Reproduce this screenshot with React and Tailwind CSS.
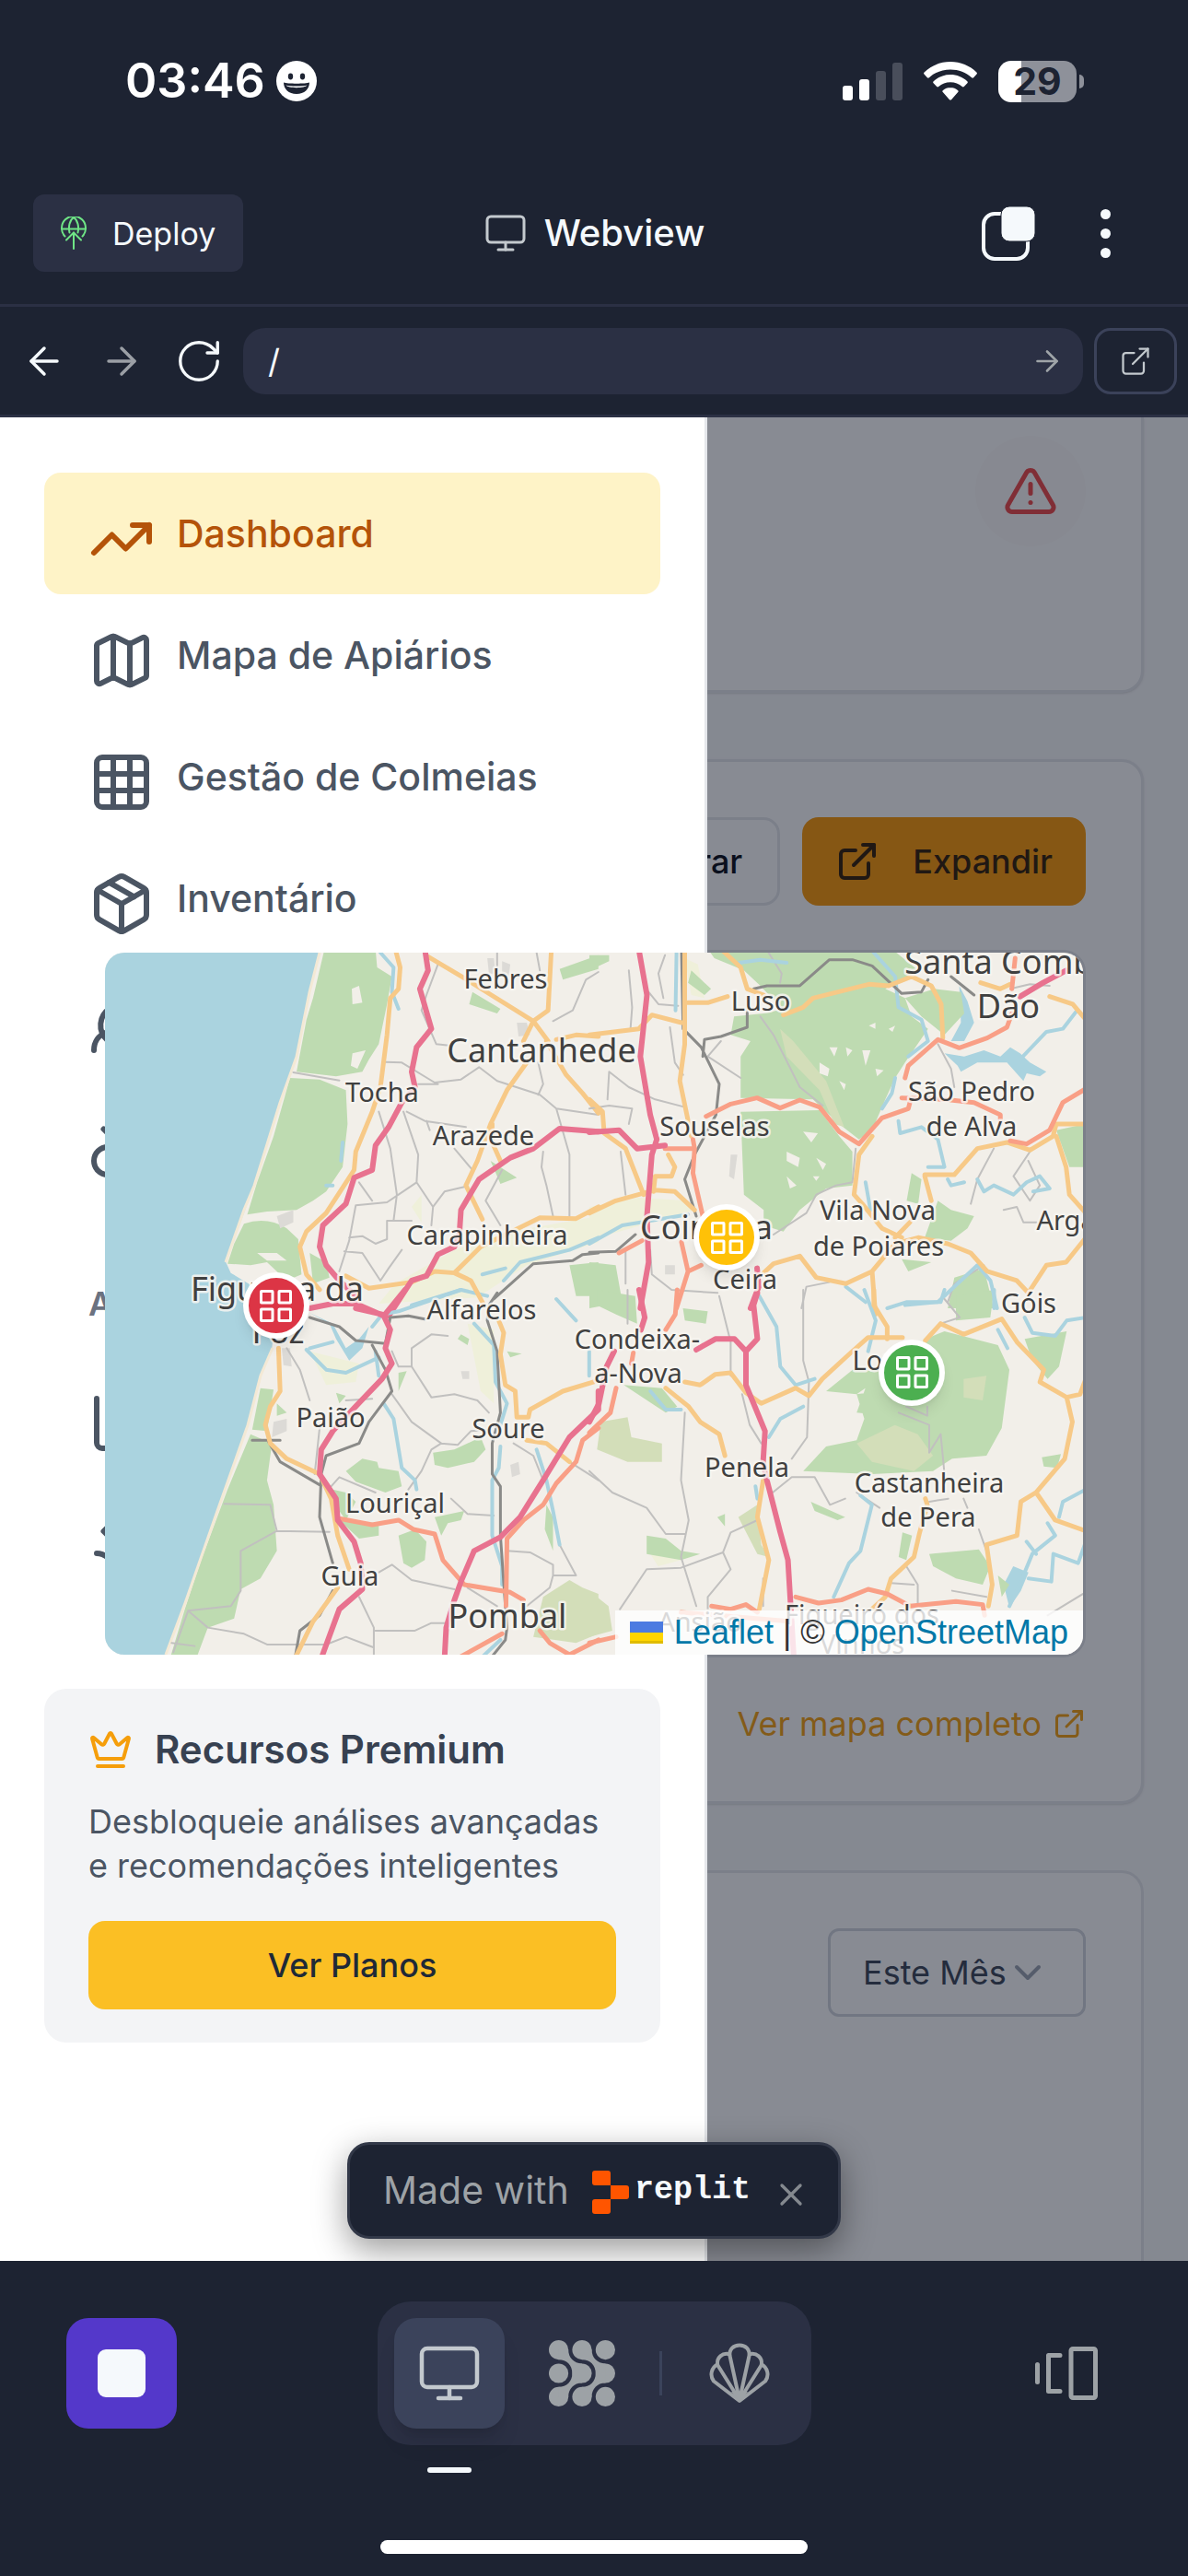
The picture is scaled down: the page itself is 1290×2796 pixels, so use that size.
import React from "react";
import {
  TrendingUp,
  Map as MapIcon,
  Grid3x3,
  Package,
  Crown,
  ExternalLink,
  TriangleAlert,
  Monitor,
  ArrowLeft,
  ArrowRight,
  RotateCw,
  ChevronDown,
  X,
} from "lucide-react";

/* ---------- status bar ---------- */

function StatusBar() {
  return (
    <div className="flex h-44 items-center justify-between pl-[136px] pr-[113px]">
      <div className="flex items-center gap-3 text-white">
        <span className="text-[52px] font-semibold leading-none">03:46</span>
        <svg viewBox="0 0 44 44" className="size-11" aria-hidden="true">
          <circle cx="22" cy="22" r="22" fill="#fff" />
          <ellipse cx="15.5" cy="17" rx="2.7" ry="3.4" fill="#1d2332" />
          <ellipse cx="28.5" cy="17" rx="2.7" ry="3.4" fill="#1d2332" />
          <path d="M8 23.5c4 1.6 24 1.6 28 0 0 7-5.500 12.500-14 12.500S8 30.500 8 23.500Z" fill="#1d2332" />
          <path d="M10.500 26.500c4 1.300 19 1.300 23 0-2 3.500-21 3.500-23 0Z" fill="#fff" />
        </svg>
      </div>
      <div className="flex items-center gap-[23px]">
        <div className="flex h-[41px] items-end gap-[7px]">
          <span className="h-4 w-[11px] rounded-[3px] bg-white" />
          <span className="h-[23px] w-[11px] rounded-[3px] bg-white" />
          <span className="h-8 w-[11px] rounded-[3px] bg-[#494e5b]" />
          <span className="h-[41px] w-[11px] rounded-[3px] bg-[#494e5b]" />
        </div>
        <svg viewBox="0 0 58 42" className="h-[42px] w-[58px]" fill="#fff" aria-hidden="true">
          <path d="M29 0C18 0 8 4.300.6 11.400c-.7.700-.7 1.500-.1 2.200l3.400 3.600c.6.600 1.400.6 2 0C12 11.700 20 8.400 29 8.400s17 3.300 23.100 8.800c.6.600 1.400.6 2 0l3.400-3.600c.6-.7.6-1.500-.1-2.200C50 4.300 40 0 29 0Z" />
          <path d="M29 14c-7 0-13.500 2.700-18.300 7.200-.7.700-.7 1.500-.1 2.100l3.600 3.700c.6.600 1.400.6 2 0 3.400-3 7.900-4.800 12.800-4.800s9.400 1.800 12.800 4.800c.6.600 1.400.6 2 0l3.600-3.700c.6-.6.6-1.400-.1-2.100C42.500 16.700 36 14 29 14Z" />
          <path d="M29 28c-3 0-5.900 1.100-8 2.900-.8.700-.8 1.500-.2 2.200l7 7.900c.7.800 1.700.8 2.400 0l7-7.900c.6-.7.6-1.500-.2-2.200-2.100-1.800-5-2.900-8-2.900Z" />
        </svg>
        <div className="flex items-center gap-[3px]">
          <div className="flex h-[45px] w-[85px] items-center justify-center rounded-[14px] bg-linear-to-r from-white from-30% to-[#8e919a] to-30%">
            <span className="text-[41px] font-bold leading-none text-[#1d2332]">29</span>
          </div>
          <span className="h-[15px] w-[5px] rounded-r-full bg-[#8e919a]" />
        </div>
      </div>
    </div>
  );
}

/* ---------- workspace header ---------- */

function DeployIcon() {
  return (
    <svg viewBox="0 0 28 36" className="h-9 w-7" fill="none" stroke="#6fe586" strokeWidth="2" strokeLinecap="round" aria-hidden="true">
      <path d="M4.500 21.500A13 13 0 1 1 23.500 21.500" />
      <path d="M1 13.500h26" />
      <path d="M9.500 17.500C8 11 9.500 4 14 1c4.500 3 6 10 4.500 16.500" />
      <path d="M14 35V18M6 25.500l8-8 8 8" />
    </svg>
  );
}

function WorkspaceHeader() {
  return (
    <header className="grid h-[157px] grid-cols-[1fr_auto_1fr] items-center border-b-3 border-[#2b3044] px-9">
      <button className="flex h-[84px] items-center gap-7 justify-self-start rounded-xl bg-[#2b3044] px-[30px] text-[34px] text-[#f5f9fc]">
        <DeployIcon />
        Deploy
      </button>
      <div className="flex items-center gap-[18px] text-[#f5f9fc]">
        <Monitor className="size-12 text-[#c3c9ce]" strokeWidth={1.5} />
        <h1 className="text-[40px] font-medium leading-none">Webview</h1>
      </div>
      <div className="flex items-center justify-end gap-[71px] pr-12">
        <button aria-label="Tabs">
          <svg viewBox="0 0 58 59" className="h-[59px] w-[58px]" aria-hidden="true">
            <rect x="2" y="8" width="48" height="49" rx="12" fill="none" stroke="#f5f9fc" strokeWidth="4" />
            <rect x="21" y="0" width="37" height="38" rx="9" fill="#f5f9fc" stroke="#1d2332" strokeWidth="1" />
          </svg>
        </button>
        <button aria-label="More options" className="flex flex-col gap-2.5">
          <span className="size-[11px] rounded-full bg-[#f5f9fc]" />
          <span className="size-[11px] rounded-full bg-[#f5f9fc]" />
          <span className="size-[11px] rounded-full bg-[#f5f9fc]" />
        </button>
      </div>
    </header>
  );
}

function BrowserBar() {
  return (
    <div className="flex h-[120px] items-center border-b-3 border-[#2b3044] pl-1.5 pr-3">
      <button aria-label="Back" className="flex w-[84px] justify-center text-[#f5f9fc]">
        <ArrowLeft className="size-12" strokeWidth={1.75} />
      </button>
      <button aria-label="Forward" className="flex w-[84px] justify-center text-[#9b9fa5]">
        <ArrowRight className="size-12" strokeWidth={1.75} />
      </button>
      <button aria-label="Reload" className="flex w-[84px] justify-center text-[#f5f9fc]">
        <RotateCw className="size-[54px]" strokeWidth={1.5} />
      </button>
      <div className="ml-1.5 flex h-[72px] min-w-0 flex-1 items-center rounded-3xl bg-[#2b3044] pl-[27px] pr-[21px]">
        <input aria-label="Path" defaultValue="/" className="min-w-0 flex-1 bg-transparent text-4xl leading-none text-[#f5f9fc] outline-none" />
        <button aria-label="Go" className="text-[#9fa4a8]">
          <ArrowRight className="size-9" strokeWidth={1.75} />
        </button>
      </div>
      <button aria-label="Open in new tab" className="ml-3 flex h-[72px] w-[90px] items-center justify-center rounded-[18px] border-3 border-[#3b425a] text-[#c3c9ce]">
        <ExternalLink className="size-9" strokeWidth={1.5} />
      </button>
    </div>
  );
}

/* ---------- map ---------- */

const TILES = [
  {
    id: "nw",
    transform: "translate(-24 -14) scale(.357 .3333)",
    ocean: "M0 0H725L718 42L690 170L650 380L600 530L520 800L490 890L435 1050L450 1085L520 1130L565 1215H0Z",
    pale: "M950 1120L1130 1010L1300 950L1568 900V985L1350 1060L1200 1165L900 1185ZM1000 870L1030 830L1030 920Z",
    forest:
      "M735 30H890L895 90L940 120L925 210L900 340L870 390L850 430L770 445L650 430L680 260L700 190ZM630 450L720 455L800 490L805 600L790 740L740 820L700 850L650 880L560 885L500 895L530 790L580 640ZM490 925Q560 900 620 940L655 975L665 1090L620 1110L560 1050L510 1060L440 1055L460 990ZM690 1020L740 1050L750 1100L700 1120ZM1185 170L1270 225L1260 240L1175 210ZM1240 720L1320 775L1270 795ZM1450 95L1568 50V95L1460 130ZM1480 1060L1568 1050V1160L1500 1160Z",
    clearing: "M818 160l22-10 10 55-30 5zM820 370l40-10-25 60-20-10zM530 1020l60 0 30 25-60 0z",
    scrub: "",
    urban: "M1230 60l20 0 5 50-20 0zM1275 70l25 10-5 40-20-5zM1320 270l30 0 10 40-35 5zM590 900l50-20 0 40-40 20z",
    gray:
      "M1080 80L1045 180L1030 230L1075 340L1120 345M920 398L970 400L1070 465L1150 455L1205 415L1260 460L1390 505L1440 550L1568 570M640 432L780 458M900 560L935 680L955 830L945 915M975 560L1020 700L1015 790L960 830L925 855L830 865L810 980L780 1080M985 560L1040 590L1165 610M1015 790L1065 870L1060 930M1065 870L1100 820L1160 805M795 1015L850 1020L905 1110L930 1070L970 1010M810 970L850 965L890 990L925 975V915H1000M1568 105L1530 130L1490 230L1430 265M1385 400L1400 470L1385 505M1440 550L1480 700V900M1400 690L1395 740L1410 800L1430 900M1275 750L1225 850L1270 930M1130 680L1185 750M1380 42L1390 100M1260 42V100M1020 470H1080M840 790L880 850M1045 590L1055 620",
    rail: "M1568 1020L1520 1025L1490 1045L1370 1055L1250 1170",
    river: "M905 42L945 90L940 170L960 225M1568 970L1480 1010L1330 1050L1280 1110M1215 1090L1285 1070M790 660L785 720M740 800h20M1000 1190L1150 1140L1230 1160",
    orange:
      "M950 30L965 90L960 160L935 190L925 310L905 480L880 560L830 690L825 750L740 890L680 950L660 1000L680 1090L720 1140M1050 55L1160 125L1370 265L1415 330M1425 30L1415 230L1370 265L1340 330M1350 400L1290 490L1240 600L1200 720L1165 800L1215 910M1245 600L1245 660L1270 720M1410 330L1470 440L1520 500L1568 565M1440 325L1500 310L1568 315M800 1095L870 1135L1000 1115L1070 1080L1130 1085L1210 1000L1390 905L1500 908L1568 870M1130 1085L1180 1110L1220 1190",
    salmon: "",
    pink:
      "M1040 30L1050 100L1025 160L1060 290L1015 350L1000 430L1010 480L970 530L930 610L890 670L880 750L825 775L800 860L730 930L720 1000L740 1060L780 1110L830 1160M1568 625L1450 615L1370 680L1300 710L1205 780L1150 880L1145 960L1130 1000L1080 1025L1045 1095L1000 1110L930 1225",
  },
  {
    id: "ne",
    transform: "translate(526 -14) scale(.357 .3333)",
    ocean: "M1080 370L1140 380L1200 360L1250 380L1280 350L1310 370L1340 400L1390 430L1370 445L1330 435L1320 460L1270 400L1180 400L1130 430L1120 410ZM1125 150L1150 200L1170 270L1140 330L1100 330L1130 270Z",
    pale: "M290 60L330 80L350 190L310 180ZM0 870L150 840L300 850L320 880L60 960L0 980Z",
    forest:
      "M360 30H920L1000 100L900 160L700 200L600 240L520 150L470 100L380 60ZM530 240L700 200L900 160L960 190L980 250L1030 290L960 400L930 450L900 520L860 620L820 650L760 600L640 480L600 400ZM440 250L530 240L600 400L680 520L460 515L460 380L490 330L430 310ZM460 560L700 555L760 640L800 690V800L720 810L640 880L590 950L530 930V880L470 830ZM960 190L1050 160L1130 170L1140 240L1080 310L1010 250ZM1420 620L1510 600V740L1460 740ZM980 760L1010 780L1000 860L965 850ZM1060 850L1100 880L1170 900L1150 940L1100 980L1020 970ZM0 50H60V70L0 100ZM0 1050L80 1060L100 1180L0 1200ZM1110 1100L1200 1070L1230 1200H1090ZM310 100L370 160L350 180L300 140ZM950 1040L1040 1050L970 1080Z",
    clearing: "M700 400l30 20-5 25-25-10zM730 350l25 0-10 30zM780 350l20 10-15 20zM600 690l40 20-5 30-35-20zM650 625l45 5-20 30zM600 770l30 30-20 10zM830 360l25 0-15 50zM870 420l25 5-20 20zM760 460l20 10-5 20zM850 280l20-10 0 20zM910 290l20-10-8 20zM690 710l30 20-10 20zM680 770l20 0-10 15z",
    scrub: "M580 290L620 330L720 460L775 610L745 600L700 490L600 380Z",
    urban: "M430 700l20 0-10 80-15-10zM230 1060l30 0 0 30-30 0z",
    gray:
      "M230 50L210 110L225 190M120 100L130 220L125 290M60 430L120 480L200 520L290 545M0 550L60 540L130 550L120 600M245 285L260 400L285 440M360 380L460 450M400 330L360 380M520 250L560 310L640 480L710 540M95 690L110 830M1060 340L1100 420L1110 480M1230 680L1180 780L1160 860M1340 690L1290 770L1340 850L1370 800L1335 720M110 1010V1120M185 1010L190 1090L250 1140L390 1150M810 680L800 790L750 800L690 830L660 890L560 960M645 1200L660 1130L730 1115M1090 1180L1110 1120L1200 1060M1260 880L1300 870L1320 920H1360M545 42L585 110L580 140M60 430L55 520M180 170L210 210L270 215M1280 160L1340 145L1400 150",
    rail:
      "M280 30L285 290L340 350L395 470L385 570L320 700L290 780L325 900M345 380L350 325L400 315L480 285V235M500 160L540 150L640 150L730 65H800L860 85L950 175L1010 170L1030 130M0 1018L80 1015L140 960M1100 120L1170 180",
    river:
      "M865 42L930 120L940 220L1010 260L1030 330L970 380M1310 390L1390 300L1440 290L1480 235M930 450L920 500L890 550M940 590L945 630L1010 610L1060 650L1080 740H1030M1090 780L1100 800L1140 790M1180 780L1200 820L1230 800L1290 830L1330 790L1370 770L1400 810L1350 820M840 790L855 880M0 990L100 930L300 895M780 1130L840 1180M960 1190L1060 1180L1180 1060L1220 1110L1240 1200M265 42L262 230M455 75L520 65L600 75",
    orange:
      "M0 310L150 290L190 245L280 270M290 30V340L275 460L310 640M400 30L460 90L480 160L530 180M300 205H360L420 185M590 245L650 220L680 190L850 145L910 150L980 120L1040 150L1070 210L1075 320M0 520L40 560L45 630L110 680L165 830M0 890L80 850L200 815L260 820L320 880M240 700L260 740L250 770L200 770L195 820M860 640L820 700L805 830L830 860L890 940L950 970M930 970L975 920M1020 765H1110L1180 680L1270 660L1340 685L1410 640L1420 600H1510M1420 640L1450 740L1460 830L1510 890M1020 770L1040 850M530 1085L560 1055L640 1030L690 1100L780 1120L860 1080L870 1220M860 1080L930 990L1000 970L1090 990L1160 1020L1210 1080L1300 1110L1335 1150L1390 1060L1450 1050L1510 970M1400 185L1470 210L1510 260M1190 140L1250 160L1280 145",
    salmon:
      "M355 575L430 535L510 515L580 548L640 522L700 545L760 625L820 665L890 580L970 550L975 530M960 450L970 410L1060 325L1125 352L1210 320L1270 285L1285 240M1285 160L1295 60M950 515L1080 520L1170 530L1250 570V600M1280 655L1330 665L1400 620L1440 530L1510 485M230 680H320L315 760L345 900M320 680L315 650M90 1020L160 980M280 985L300 1080L340 1060M300 1080L265 1200",
    pink: "M150 30L175 180L155 380L185 570L205 650L190 700L175 900L180 1050L155 1200M0 627L90 620L145 680L230 670M510 1070L515 1130L490 1200M1310 185L1380 140L1450 100",
  },
  {
    id: "sw",
    transform: "translate(-24 366) scale(.357 .3333)",
    ocean: "M0 40H590L575 190L540 280L500 440L410 720L350 900L310 1020L250 1200H0ZM690 75L750 110L770 160L810 230L850 190L870 120L840 160L800 190L760 110Z",
    pale: "M690 200L840 240L830 300L740 310ZM1170 110L1250 130V370L1210 330Z",
    forest:
      "M540 320L580 325L560 460L515 455ZM510 470L575 500L560 620L580 700L590 850L540 940L480 975L460 1070L380 1100L345 1200H265L310 1040L360 880L440 650ZM800 590L850 550L895 560L900 580L960 590L970 640L920 660L830 625ZM1065 530L1130 520L1210 480L1225 520L1190 560L1110 580L1070 570ZM960 800L1010 780L1045 820L1040 880L1000 905L975 890ZM1070 740L1160 720L1150 750L1110 760L1090 800ZM780 750L900 760V800L840 810ZM760 650L800 660L830 690L800 750L780 720ZM1140 160L1150 145L1175 160L1170 180ZM960 270L985 265L960 330ZM770 335L800 345L780 370ZM590 370L620 400L590 410ZM1290 200L1335 208L1300 220ZM1410 700L1430 740L1430 850L1405 780Z",
    clearing: "",
    scrub: "M1400 1000L1480 945L1520 970L1568 990V1120L1500 1150L1370 1130Z",
    urban: "M580 430l40-10 0 40-45 20zM605 190l25 0 5 60-25-5zM1300 570l25-10 5 40-25 10zM1150 265l25 0 0 25-20 0z",
    gray:
      "M1110 150L1060 145L1000 190V250L1060 350L1130 340L1200 360L1235 400M940 340L1000 430L1090 500L1060 520L1030 590L990 650M1090 500L1140 505L1180 460L1240 455M620 190L660 260L690 360M720 450L705 600M430 697L570 700L590 785L480 850V980L450 1030L320 1045L380 1100L490 1120L560 1155H740L800 1130L885 1165V1200M590 785L750 788M755 640L780 610L890 660M900 920L940 895L1000 945L1130 975M840 1000L885 1100V1165M890 1110H1010L1060 1085H1110M1290 850L1360 855L1430 895V930H1500M1450 830L1500 930M1430 930L1420 970L1350 1030M1310 500L1370 540L1400 620M1480 560L1568 620M1120 680L1170 730L1250 735M1170 970L1260 1030M800 360L880 355M940 200L960 250H1000M270 1150L340 1160M320 1045L275 1180",
    rail:
      "M690 90L780 120L830 165L920 175L935 90L990 85L1040 95M880 180L920 260L940 330L870 430L840 500L740 540L725 600L720 740L760 890M760 980L720 1060L660 1110L645 1200M515 490H600M565 495L600 560L720 635M1260 10L1235 50L1230 100L1260 200L1270 400L1245 500V600L1270 640V800L1285 1030L1290 1100L1285 1140L1240 1200",
    river:
      "M680 195L740 260L800 270L900 220M690 190L760 170M880 120L910 80L960 70L1150 0M915 370L945 420L970 580L1010 620L1015 650M1190 110L1250 180L1255 300L1290 370L1270 440M1270 510L1265 580L1245 620V800L1275 900V960M1380 520L1410 620L1430 720L1450 830M1440 30L1500 100M1540 200V280M890 200L900 280M1270 1140L1210 1200",
    orange:
      "M595 190L600 330L570 380L555 440L570 500L620 550L720 600L755 680L775 800L810 910M775 970L700 1080L645 1200M1265 100L1280 140L1270 210L1285 310L1315 330L1320 415H1355L1360 390L1460 330L1568 295M1350 490L1410 500L1480 560",
    salmon: "M780 745L880 765L960 750L1005 780L1070 795L1095 880L1160 960L1300 985L1340 1010M1568 450L1520 490L1500 560L1440 630L1400 700L1340 750L1290 810L1287 1030M1390 1110L1420 1150L1480 1188L1568 1140M1275 1120L1140 1200",
    pink:
      "M690 60L760 45L830 45L915 85L980 0M830 60L910 80M915 85L935 130L920 190L940 240L910 290L825 385L760 460L725 520L720 600L770 680L775 750L825 820L845 890L850 975L780 1040L725 1200M1568 330V390L1480 480L1400 620L1330 740L1270 805L1190 850L1150 950L1130 1010L1105 1100L1100 1200",
  },
  {
    id: "se",
    transform: "translate(526 366) scale(.4146 .3333)",
    ocean: "M1085 960L1110 900L1150 920L1130 980L1100 1035Z",
    pale: "M160 860L240 880L180 900Z",
    forest:
      "M900 150L930 135L1070 180L1100 260L1080 450L1040 540L950 550L900 590L740 600L560 590L620 510L700 490L720 420L700 340L760 330L880 350ZM620 330L700 250L770 280L700 340ZM740 260L900 150L960 300L860 420L700 400ZM1140 160L1250 135L1230 250L1200 290L1160 230ZM960 20L1060 0L1050 90L960 100ZM890 860L1020 845L1050 900L1030 960L960 940L900 900ZM580 690L670 740L650 750L590 720ZM1070 930L1100 960L1080 1000ZM1185 545L1235 535L1225 580L1190 575ZM20 0L120 20L125 110L70 80L20 50ZM245 60L310 70L305 110L250 100ZM90 310L190 320L230 380L200 400ZM150 800L200 810L240 850L290 860L240 880L150 860ZM820 790L845 800L830 880L810 870ZM335 740L355 730V770Z",
    clearing: "",
    scrub: "M30 430L100 415L110 480L190 500V560L100 560L20 520ZM700 500L800 440L860 470L900 540L850 590L740 560ZM390 740L440 700L450 830L470 870L440 860ZM0 980L50 1030L60 1110L0 1130ZM980 290L1040 280L1030 360L980 350Z",
    urban: "",
    gray:
      "M250 400L240 620L260 750L240 870L280 1030M0 590L60 660L150 710L200 795H250M560 0V230L575 300L570 480L530 550M340 20L370 170V280M400 340L420 440L450 500M80 1040L150 910L240 905L350 855L370 790L440 750M350 855L370 910L310 1000V1040M810 400L890 440V530L920 470L930 600M480 660L530 610H590L630 700L670 680M700 660L760 710M890 690L940 680M980 680L990 710M1020 780L1040 850M830 900L860 960V1030M790 955L850 960M950 980L1040 1000M1293 990L1200 1060M930 30L970 90L920 110M830 380L885 410V380M100 0V110M455 940V1030",
    rail: "",
    river:
      "M445 20L490 120L500 250L540 310L590 290M560 380L500 420L470 480M720 0L750 100L730 200M780 60L830 40L920 40L930 0M1060 0V60M1070 130L1095 190M1140 90L1160 140L1220 150L1250 100L1300 90M710 670L740 700L710 850L680 890L640 1000M1300 650L1240 690L1230 740M1200 760L1220 800L1160 860L1130 950L1100 1030M1300 820L1280 890L1215 860L1210 950L1150 940M160 330L200 390H240M435 640L440 680M1145 820L1170 860",
    orange:
      "M200 320L260 380L290 430L340 470L355 540M250 300L290 310L330 275L370 270L410 335L450 370L540 320L575 345L610 290L680 210L730 155H820M780 160V120L745 50V0M880 165L920 110L980 145L1080 95L1120 170L1190 260L1180 300L1250 350L1265 430L1245 550L1170 660L1130 690L1120 800L1040 830L1055 960L1045 1030M1250 350L1285 340L1300 290M1170 660L1220 750L1300 785M880 680L885 700L865 790L850 870L790 940L775 1000L740 1040M455 620L440 740L470 880L445 1040",
    salmon: "M230 0L225 80L200 130M115 205L110 240M70 320L55 400L0 465M320 1030L370 1040L410 1025L440 1050M540 1000L600 1020L660 1010L730 975L780 990L840 1030L960 1015L1030 1025L1035 1060M0 1150L70 1130M240 1050L530 1080",
    pink: "M130 0L145 90L135 130M440 10L430 50L440 160L410 200L380 160H330L280 195M410 200V310L460 460L455 560L465 620L500 790L520 880L535 1190M65 200L45 250L25 370L0 430",
  },
];

const TOWN = 29;
const CITY = 36;

const PLACES = [
  ["Febres", 435, 39, TOWN],
  ["Cantanhede", 474, 119, CITY],
  ["Tocha", 301, 162, TOWN],
  ["Arazede", 411, 209, TOWN],
  ["Carapinheira", 415, 317, TOWN],
  ["Figueira da", 187, 378, CITY],
  ["Foz", 188, 424, CITY],
  ["Alfarelos", 409, 398, TOWN],
  ["Luso", 712, 63, TOWN],
  ["Santa Comba", 981, 23, CITY],
  ["Dão", 981, 71, CITY],
  ["São Pedro", 941, 161, TOWN],
  ["de Alva", 941, 199, TOWN],
  ["Souselas", 662, 199, TOWN],
  ["Coimbra", 653, 311, CITY],
  ["Vila Nova", 839, 290, TOWN],
  ["de Poiares", 840, 329, TOWN],
  ["Arganil", 1060, 301, TOWN],
  ["Ceira", 695, 365, TOWN],
  ["Góis", 1003, 391, TOWN],
  ["Condeixa-", 578, 430, TOWN],
  ["a-Nova", 579, 467, TOWN],
  ["Lousã", 852, 453, TOWN],
  ["Paião", 245, 515, TOWN],
  ["Soure", 438, 527, TOWN],
  ["Penela", 697, 569, TOWN],
  ["Louriçal", 315, 608, TOWN],
  ["Castanheira", 895, 586, TOWN],
  ["de Pera", 894, 623, TOWN],
  ["Guia", 266, 687, TOWN],
  ["Pombal", 437, 733, CITY],
  ["Ansião", 646, 737, TOWN],
  ["Figueiró dos", 822, 729, TOWN],
  ["Vinhos", 822, 761, TOWN],
];

function Road({ d, color, width }) {
  return <path d={d} fill="none" stroke={color} strokeWidth={width} vectorEffect="non-scaling-stroke" strokeLinecap="round" strokeLinejoin="round" />;
}

function MapCanvas() {
  return (
    <svg viewBox="0 0 1062 762" preserveAspectRatio="xMidYMid slice" className="block h-full w-full" role="img" aria-label="Mapa">
      <rect width="1062" height="762" fill="#f2efe9" />
      {TILES.map((t) => (
        <g key={t.id} transform={t.transform}>
          <path d={t.pale} fill="#eff0da" />
          <path d={t.ocean} fill="#aad3df" />
          <path d={t.forest} fill="#bedbb1" />
          <path d={t.scrub} fill="#d3deb9" />
          <path d={t.clearing} fill="#f2efe9" />
          <path d={t.urban} fill="#dcdad6" />
        </g>
      ))}
      <path d="M233 0L222 43L208 113L190 163L162 253L151 279L131 336M182 429L169 459L155 513L122 606L101 666L87 706L66 762" fill="none" stroke="#f3e9d5" strokeWidth="3" />
      {TILES.map((t) => (
        <g key={t.id} transform={t.transform}>
          <Road d={t.gray} color="#c1c0bf" width={2} />
          <Road d={t.river} color="#aad3df" width={4} />
          <Road d={t.rail} color="#8a8a88" width={3} />
          <Road d={t.orange} color="#f7c987" width={5} />
          <Road d={t.salmon} color="#f99f86" width={5} />
          <Road d={t.pink} color="#e8728f" width={6} />
        </g>
      ))}
      <g fontFamily="'Noto Sans', sans-serif" textAnchor="middle" fill="#404040" stroke="#f7f5f1" strokeOpacity="0.85" strokeWidth="5" strokeLinejoin="round" paintOrder="stroke">
        {PLACES.map(([name, x, y, size]) => (
          <text key={name} x={x} y={y} fontSize={size}>
            {name}
          </text>
        ))}
      </g>
    </svg>
  );
}

function HivePin({ label, className }) {
  return (
    <button aria-label={label} className={"absolute flex size-[72px] -translate-x-1/2 -translate-y-1/2 items-center justify-center rounded-full border-6 border-white shadow-lg " + className}>
      <svg viewBox="0 0 35 35" className="size-[35px]" fill="none" stroke="#fff" strokeWidth="3" aria-hidden="true">
        <rect x="1.500" y="1.500" width="12.500" height="12.500" rx=".5" />
        <rect x="21" y="1.500" width="12.500" height="12.500" rx=".5" />
        <rect x="1.500" y="21" width="12.500" height="12.500" rx=".5" />
        <rect x="21" y="21" width="12.500" height="12.500" rx=".5" />
      </svg>
    </button>
  );
}

function ApiaryMap() {
  return (
    <div className="mt-12 rounded-3xl border-3 border-gray-200">
      <div className="relative z-20 h-[762px] overflow-hidden rounded-[21px]">
        <MapCanvas />
        <HivePin label="Figueira da Foz" className="left-[17.5%] top-[50.3%] bg-[#dc3545]" />
        <HivePin label="Coimbra" className="left-[63.6%] top-[40.6%] bg-[#ffc107]" />
        <HivePin label="Lousã" className="left-[82.5%] top-[59.8%] bg-[#4caf50]" />
        <div className="absolute bottom-0 right-0 flex h-12 items-center gap-2.5 bg-white/80 px-4 font-['Liberation_Sans',sans-serif] text-4xl leading-none text-[#333]">
          <a href="#leaflet" className="flex items-center gap-3 text-[#0078a8]">
            <svg viewBox="0 0 36 24" className="h-6 w-9" aria-hidden="true">
              <path d="M0 0h36v12H0z" fill="#4c7be1" />
              <path d="M0 12h36v12H0z" fill="#ffd500" />
              <path d="M0 21h36v3H0z" fill="#e0bc00" />
            </svg>
            Leaflet
          </a>
          <span>| ©</span>
          <a href="#osm" className="text-[#0078a8]">OpenStreetMap</a>
        </div>
      </div>
    </div>
  );
}

/* ---------- dashboard page ---------- */

function DashboardPage() {
  return (
    <main className="flex flex-1 flex-col gap-[72px] bg-gray-50 px-12">
      <section className="flex h-[299px] shrink-0 justify-end rounded-b-3xl border-3 border-t-0 border-gray-200 bg-white px-[60px] pt-5 shadow-sm">
        <div className="flex size-[120px] items-center justify-center rounded-full bg-[#fdfbfa]">
          <TriangleAlert className="size-[60px] text-[#ef4444]" strokeWidth={2} />
        </div>
      </section>
      <section className="shrink-0 rounded-3xl border-3 border-gray-200 bg-white p-[60px] shadow-sm">
        <div className="flex justify-end gap-6">
          <button className="flex h-24 items-center rounded-[18px] border-3 border-gray-200 px-[38px] text-4xl font-medium text-gray-950">Filtrar</button>
          <button className="flex h-24 items-center gap-9 rounded-[18px] bg-[#fb9600] px-9 text-4xl font-medium text-[#2f1800]">
            <ExternalLink className="size-12" strokeWidth={2} />
            Expandir
          </button>
        </div>
        <ApiaryMap />
        <a href="#mapa" className="mt-12 flex h-12 items-center justify-end gap-3 text-4xl text-[#f59e0b]">
          Ver mapa completo
          <ExternalLink className="size-9" strokeWidth={2} />
        </a>
      </section>
      <section className="flex flex-1 items-start justify-end rounded-t-3xl border-3 border-b-0 border-gray-200 bg-white p-[60px]">
        <div className="relative">
          <select aria-label="Período" className="h-24 w-[280px] appearance-none rounded-xl border-3 border-gray-300 bg-white pl-[35px] text-4xl text-gray-700">
            <option>Este Mês</option>
          </select>
          <ChevronDown className="pointer-events-none absolute right-[39px] top-6 size-12 text-gray-400" strokeWidth={2} />
        </div>
      </section>
    </main>
  );
}

/* ---------- sidebar ---------- */

function BeeIcon(props) {
  return (
    <svg viewBox="0 0 24 24" fill="none" stroke="currentColor" strokeWidth="2" strokeLinecap="round" aria-hidden="true" {...props}>
      <path d="M7.500 6C4 8.500 3 14 7 17.500" />
      <path d="M2 21c0-3 1.700-5.500 4.500-6.500" />
    </svg>
  );
}

function WheelIcon(props) {
  return (
    <svg viewBox="0 0 24 24" fill="none" stroke="currentColor" strokeWidth="2" strokeLinecap="round" aria-hidden="true" {...props}>
      <circle cx="7" cy="17" r="5" />
      <path d="M5.500 5.500 8 8" />
    </svg>
  );
}

function ChartIcon(props) {
  return (
    <svg viewBox="0 0 24 24" fill="none" stroke="currentColor" strokeWidth="2" strokeLinecap="round" aria-hidden="true" {...props}>
      <path d="M3 3v16a2 2 0 0 0 2 2h16" />
    </svg>
  );
}

function HandIcon(props) {
  return (
    <svg viewBox="0 0 24 24" fill="none" stroke="currentColor" strokeWidth="2" strokeLinecap="round" strokeLinejoin="round" aria-hidden="true" {...props}>
      <path d="M7 5.500 5.500 7 7 8.500Z" fill="currentColor" />
      <path d="M3 15c1.500 0 2.500.300 4 1.500" />
    </svg>
  );
}

function NavItem({ icon: Icon, label, active }) {
  return (
    <a
      href={"#" + label}
      aria-current={active ? "page" : undefined}
      className={
        "flex h-[132px] items-center gap-6 rounded-[18px] px-12 text-[41px] font-medium leading-none " +
        (active ? "bg-[#fef3c7] text-[#b45309]" : "text-[#4b5563]")
      }
    >
      <Icon className="mt-3 size-[72px] shrink-0" strokeWidth={2} />
      <span>{label}</span>
    </a>
  );
}

function Sidebar() {
  return (
    <aside className="absolute inset-y-0 left-0 z-10 flex w-[768px] flex-col border-r-3 border-gray-200 bg-white px-12 pt-[60px]">
      <nav className="flex flex-col">
        <NavItem icon={TrendingUp} label="Dashboard" active />
        <NavItem icon={MapIcon} label="Mapa de Apiários" />
        <NavItem icon={Grid3x3} label="Gestão de Colmeias" />
        <NavItem icon={Package} label="Inventário" />
        <NavItem icon={BeeIcon} label="" />
        <NavItem icon={WheelIcon} label="" />
        <h2 className="flex h-[168px] items-end px-12 pb-10 text-4xl font-semibold leading-none text-[#6b7280]">A</h2>
        <NavItem icon={ChartIcon} label="" />
        <NavItem icon={HandIcon} label="" />
      </nav>
      <section className="mt-[96px] rounded-3xl bg-[#f3f4f6] px-12 pb-9 pt-[42px]">
        <div className="flex h-12 items-center gap-6">
          <Crown className="size-12 text-[#f59e0b]" strokeWidth={2} />
          <h3 className="text-[42px] font-semibold leading-none text-[#374151]">Recursos Premium</h3>
        </div>
        <p className="mt-[30px] text-4xl leading-12 text-[#4b5563]">
          Desbloqueie análises avançadas
          <br />e recomendações inteligentes
        </p>
        <button className="mt-9 h-24 w-full rounded-[18px] bg-[#fbbf24] text-4xl font-medium text-[#1f2937]">Ver Planos</button>
      </section>
    </aside>
  );
}

function ReplitBadge() {
  return (
    <div className="absolute bottom-6 left-1/2 z-30 flex h-[105px] w-[536px] -translate-x-1/2 items-center rounded-3xl border-3 border-[#323848] bg-[#1d2332] pl-9 pr-[31px] shadow-[0_12px_36px_rgba(0,0,0,0.4)]">
      <span className="text-[41px] leading-none text-[#9da2a6]">Made with</span>
      <a href="#replit" className="ml-auto flex items-center gap-1.5">
        <svg viewBox="0 0 40 47" className="mt-1 h-[47px] w-10" fill="#ff5500" aria-hidden="true">
          <path d="M3 0h14a3 3 0 0 1 3 3v13H3a3 3 0 0 1-3-3V3a3 3 0 0 1 3-3Z" />
          <path d="M20 16h17a3 3 0 0 1 3 3v9a3 3 0 0 1-3 3H20Z" />
          <path d="M3 31h17v13a3 3 0 0 1-3 3H3a3 3 0 0 1-3-3V34a3 3 0 0 1 3-3Z" />
        </svg>
        <span className="font-['Liberation_Mono',monospace] text-[35px] font-bold leading-none text-[#f5f9fc]">replit</span>
      </a>
      <button aria-label="Close" className="ml-6 mt-2 text-[#84898f]">
        <X className="size-10" strokeWidth={2} />
      </button>
    </div>
  );
}

/* ---------- bottom bar ---------- */

function AgentIcon() {
  return (
    <svg viewBox="0 0 72 72" className="size-[72px]" fill="#9da2a6" aria-hidden="true">
      {[10.6, 36, 61.4].map((y) => [10.6, 36, 61.4].map((x) => <circle key={x + "-" + y} cx={x} cy={y} r="10.600" />))}
      {[0, 25.4].map((x) => (
        <g key={x} transform={`translate(${x} 0)`}>
          <path d="M21.200 10.600c0 8.500 6 14.800 14.800 14.800V36H25.400c0-8.800-6-14.800-14.800-14.800V10.600Z" />
          <path d="M21.200 61.400c0-8.500 6-14.800 14.800-14.800V36H25.400c0 8.800-6 14.800-14.800 14.800v10.600Z" />
        </g>
      ))}
    </svg>
  );
}

function ShellIcon() {
  return (
    <svg viewBox="0 0 66 66" className="size-[66px]" fill="none" stroke="#9da2a6" strokeWidth="4" strokeLinejoin="round" aria-hidden="true">
      <path d="M33 62 22.500 14C21.500 7 26.500 2.500 33 2.500S44.500 7 43.500 14L33 62" />
      <path d="M22.500 12.500C15 10 7 16 9.500 24.500L33 62" />
      <path d="M43.500 12.500C51 10 59 16 56.500 24.500L33 62" />
      <path d="M9.500 23C3 26.500 0 34.500 5 41.500L33 63 61 41.500c5-7 2-15-4.500-18.500" />
      <path d="M33 64 24 53h18Z" fill="#9da2a6" stroke="none" />
    </svg>
  );
}

function BottomBar() {
  return (
    <footer className="flex h-[342px] shrink-0 flex-col items-center pb-6 pt-11">
      <div className="grid w-full grid-cols-[1fr_auto_1fr] items-center px-[72px]">
        <button aria-label="Stop" className="flex size-[120px] items-center justify-center rounded-3xl bg-[#5438ca]">
          <span className="size-[52px] rounded-[9px] bg-[#f5f9fc]" />
        </button>
        <div className="flex h-[156px] items-center gap-6 rounded-[36px] bg-[#2b3044] px-[18px]">
          <button aria-label="Webview" className="relative flex size-[120px] items-center justify-center rounded-3xl bg-[#3b435b] text-[#c3c9ce] shadow-xl">
            <Monitor className="size-[72px]" strokeWidth={1.5} />
            <span className="absolute -bottom-12 left-9 h-1.5 w-12 rounded-full bg-[#f5f9fc]" />
          </button>
          <button aria-label="Agent" className="flex size-[120px] items-center justify-center">
            <AgentIcon />
          </button>
          <span className="h-12 w-[3px] bg-[#3b435b]" />
          <button aria-label="Shell" className="flex size-[120px] items-center justify-center">
            <ShellIcon />
          </button>
        </div>
        <button aria-label="Panels" className="flex size-[120px] items-center justify-center justify-self-end">
          <svg viewBox="0 0 68 58" className="h-[58px] w-[68px]" fill="none" stroke="#9da2a6" strokeWidth="5" strokeLinecap="round" strokeLinejoin="round" aria-hidden="true">
            <path d="M2.500 19.500v19M27 9.500H14.500v39H27" />
            <rect x="39" y="2.500" width="26.500" height="53" rx="2" />
          </svg>
        </button>
      </div>
      <div className="mt-auto h-[15px] w-[36%] rounded-full bg-white" />
    </footer>
  );
}

export default function App() {
  return (
    <div className="flex min-h-screen flex-col bg-[#1d2332] font-['Inter',sans-serif]">
      <StatusBar />
      <WorkspaceHeader />
      <BrowserBar />
      <div className="relative flex flex-1 flex-col overflow-hidden">
        <DashboardPage />
        <div className="absolute inset-0 bg-[#111827]/50" />
        <Sidebar />
        <ReplitBadge />
      </div>
      <BottomBar />
    </div>
  );
}
